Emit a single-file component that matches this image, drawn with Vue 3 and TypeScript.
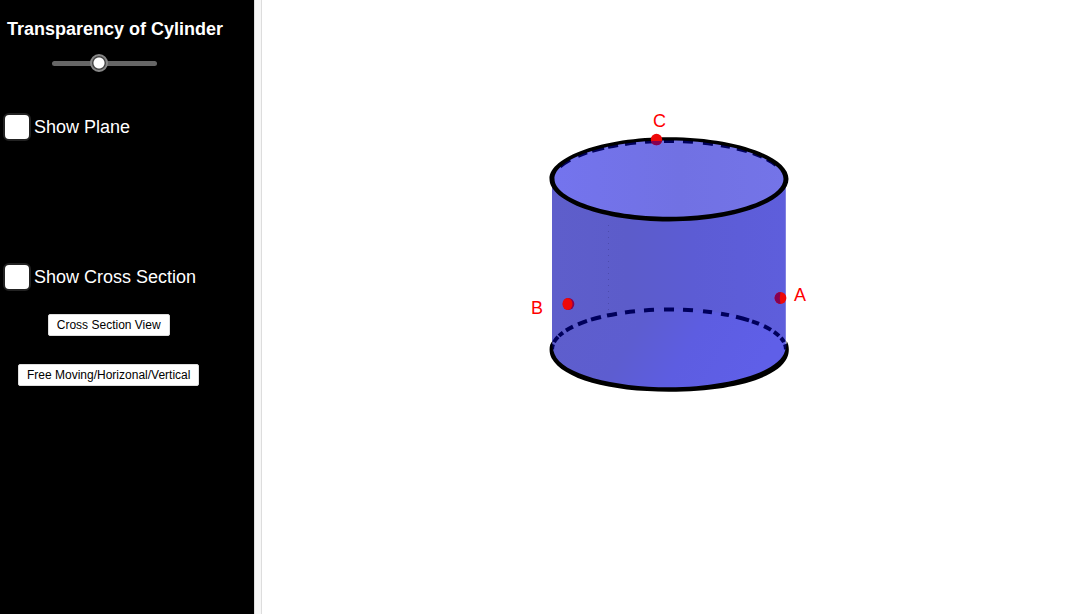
<script setup lang="ts">
import { ref } from 'vue'

const transparency = ref(44)
const showPlane = ref(false)
const showSection = ref(false)

const cx = 407
const rx = 117
const ry = 40

// Elliptical arc along the far side of a rim, between two horizontal positions
function rimArc(cy: number, from: number, to: number): string {
  const y = (x: number) => cy - ry * Math.sqrt(Math.max(0, 1 - ((x - cx) / rx) ** 2))
  return `M${from} ${y(from).toFixed(2)}A${rx} ${ry} 0 0 1 ${to} ${y(to).toFixed(2)}`
}

const baseDashes: [number, number][] = [
  [290, 291], [292, 296], [297, 301], [304, 311], [316, 325], [329, 339], [345, 355],
  [363, 373], [382, 392], [402, 412], [421, 431], [441, 450], [459, 467], [474, 487],
  [490, 497], [502, 509], [512, 517], [519, 522], [523, 524],
]
const topDashes: [number, number][] = [
  [298, 308], [316, 325], [330, 342], [346, 356], [363, 374], [383, 392],
  [402, 412], [421, 431], [441, 451], [459, 468], [475, 485], [491, 500], [505, 514],
]
</script>

<template>
  <div class="applet">
    <aside class="panel">
      <label class="title" for="transparency">Transparency of Cylinder</label>
      <input id="transparency" v-model="transparency" class="slider" type="range" min="0" max="100" />
      <label class="check plane"><input v-model="showPlane" type="checkbox" />Show Plane</label>
      <label class="check section"><input v-model="showSection" type="checkbox" />Show Cross Section</label>
      <div class="actions">
        <button type="button">Cross Section View</button>
        <button type="button">Free Moving/Horizonal/Vertical</button>
      </div>
    </aside>
    <div class="divider"></div>
    <main class="view">
      <svg class="scene" viewBox="0 0 809 614" role="img" aria-label="Cylinder with points A, B and C">
        <defs>
          <linearGradient id="side" x1="0" x2="1" y1="0" y2="0">
            <stop offset="0" stop-color="#5e5ecb" />
            <stop offset="0.32" stop-color="#5c5cca" />
            <stop offset="0.6" stop-color="#5c5cd4" />
            <stop offset="1" stop-color="#5e5edc" />
          </linearGradient>
          <linearGradient id="base" x1="0" x2="1" y1="0" y2="0.2">
            <stop offset="0" stop-color="#5e5ecb" />
            <stop offset="0.4" stop-color="#5d5dd0" />
            <stop offset="0.65" stop-color="#5d5de1" />
            <stop offset="1" stop-color="#5f5fe8" />
          </linearGradient>
          <linearGradient id="lid" x1="0" x2="1" y1="0" y2="0">
            <stop offset="0" stop-color="#7474ee" />
            <stop offset="0.55" stop-color="#7171e3" />
            <stop offset="1" stop-color="#7474e8" />
          </linearGradient>
        </defs>
        <path d="M290 179H524V349A117 40 0 0 1 290 349Z" fill="url(#side)" />
        <ellipse :cx="cx" cy="349" :rx="rx" :ry="ry" fill="url(#base)" />
        <path d="M523.5 181V349" stroke="#8080e0" />
        <path d="M346.5 225V310" stroke="#4c4cac" stroke-dasharray="1 5" />
        <ellipse :cx="cx" cy="179" :rx="rx" :ry="ry" fill="url(#lid)" />
        <path v-for="d in topDashes" :key="'t' + d[0]" :d="rimArc(181, d[0], d[1])" class="dash" />
        <path v-for="d in baseDashes" :key="'b' + d[0]" :d="rimArc(349.5, d[0], d[1])" class="dash" />
        <path d="M290.500 341C286.500 345 287 353 289.500 358C301 379 347 391.700 407 391.700S515 379 525 358C527.500 353 527.500 345 524.500 341Q525 346 523 351C517 373 463 387.300 407 387.300S300 374 292.500 354Q289.500 347 290.500 341Z" />
        <path
          fill-rule="evenodd"
          d="M287.500 179C287.500 156.500 341 137.200 407 137.200S526.500 156.500 526.500 179S473 221.500 407 221.500S287.500 201.500 287.500 179ZM292.500 179C292.500 198.500 344 216.800 407 216.800S521.500 198.500 521.500 179S470 140.500 407 140.500S292.500 159 292.500 179Z"
        />
        <circle cx="394.500" cy="139.500" r="5.700" fill="#ee0808" />
        <path d="M389 141H400A5.700 5.700 0 0 1 389 141Z" fill="#850052" />
        <ellipse cx="306.500" cy="304" rx="5.800" ry="6" fill="#850052" />
        <ellipse cx="305.500" cy="304" rx="5" ry="6" fill="#ee0808" />
        <circle cx="518.500" cy="298" r="5.900" fill="#ee0808" />
        <path d="M518.500 292.100A5.900 5.900 0 0 0 518.500 303.900Q517 298 518.500 292.100Z" fill="#850052" />
        <text x="391" y="127">C</text>
        <text x="269" y="314">B</text>
        <text x="532" y="301">A</text>
      </svg>
    </main>
  </div>
</template>

<style>
body {
  margin: 0;
  background: #fff;
}
</style>

<style scoped>
.applet {
  display: flex;
  height: calc(100vh - 2px);
  min-height: 420px;
  font-family: "Liberation Sans", Arial, sans-serif;
}
.panel {
  display: flex;
  flex-direction: column;
  align-items: flex-start;
  flex: 0 0 254px;
  box-sizing: border-box;
  padding: 19px 3px;
  background: #000;
  color: #fff;
  font-size: 18px;
  line-height: 20px;
}
.title {
  margin-left: 4px;
  font-weight: bold;
}
.slider {
  appearance: none;
  width: 105px;
  height: 20px;
  margin: 14px 0 0 49px;
  background: transparent;
}
.slider::-webkit-slider-runnable-track {
  height: 5px;
  border-radius: 3px;
  background: #666;
}
.slider::-webkit-slider-thumb {
  appearance: none;
  box-sizing: border-box;
  width: 18px;
  height: 18px;
  margin-top: -7px;
  border: 2px solid #888;
  border-radius: 50%;
  background: radial-gradient(circle, #fff 5px, #444 6px);
}
.check {
  display: flex;
  align-items: center;
  gap: 3px;
  height: 28px;
  line-height: 22px;
}
.check input {
  appearance: none;
  box-sizing: border-box;
  width: 28px;
  height: 28px;
  margin: 0;
  border: 2px solid #222;
  border-radius: 6px;
  background: #fff;
}
.check input:checked {
  background: #6161ff;
}
.plane {
  margin-top: 40px;
}
.section {
  margin-top: 122px;
}
.actions {
  display: flex;
  flex-direction: column;
  align-items: center;
  gap: 28px;
  margin: 23px 0 0 15px;
}
.actions button {
  height: 22px;
  padding: 0 8px;
  border: 1px solid #ddd;
  border-radius: 2px;
  background: #fff;
  color: #000;
  font-family: inherit;
  font-size: 12px;
  line-height: 20px;
}
.divider {
  flex: 0 0 8px;
  box-sizing: border-box;
  border: solid #ddd;
  border-width: 0 1px;
  background: #f7f7f7;
}
.view {
  flex: 1;
  min-width: 0;
}
.scene {
  display: block;
  width: 100%;
  height: 100%;
}
.scene text {
  fill: #f00;
  font-size: 18px;
}
.dash {
  fill: none;
  stroke: #00005c;
  stroke-width: 4px;
}
</style>
